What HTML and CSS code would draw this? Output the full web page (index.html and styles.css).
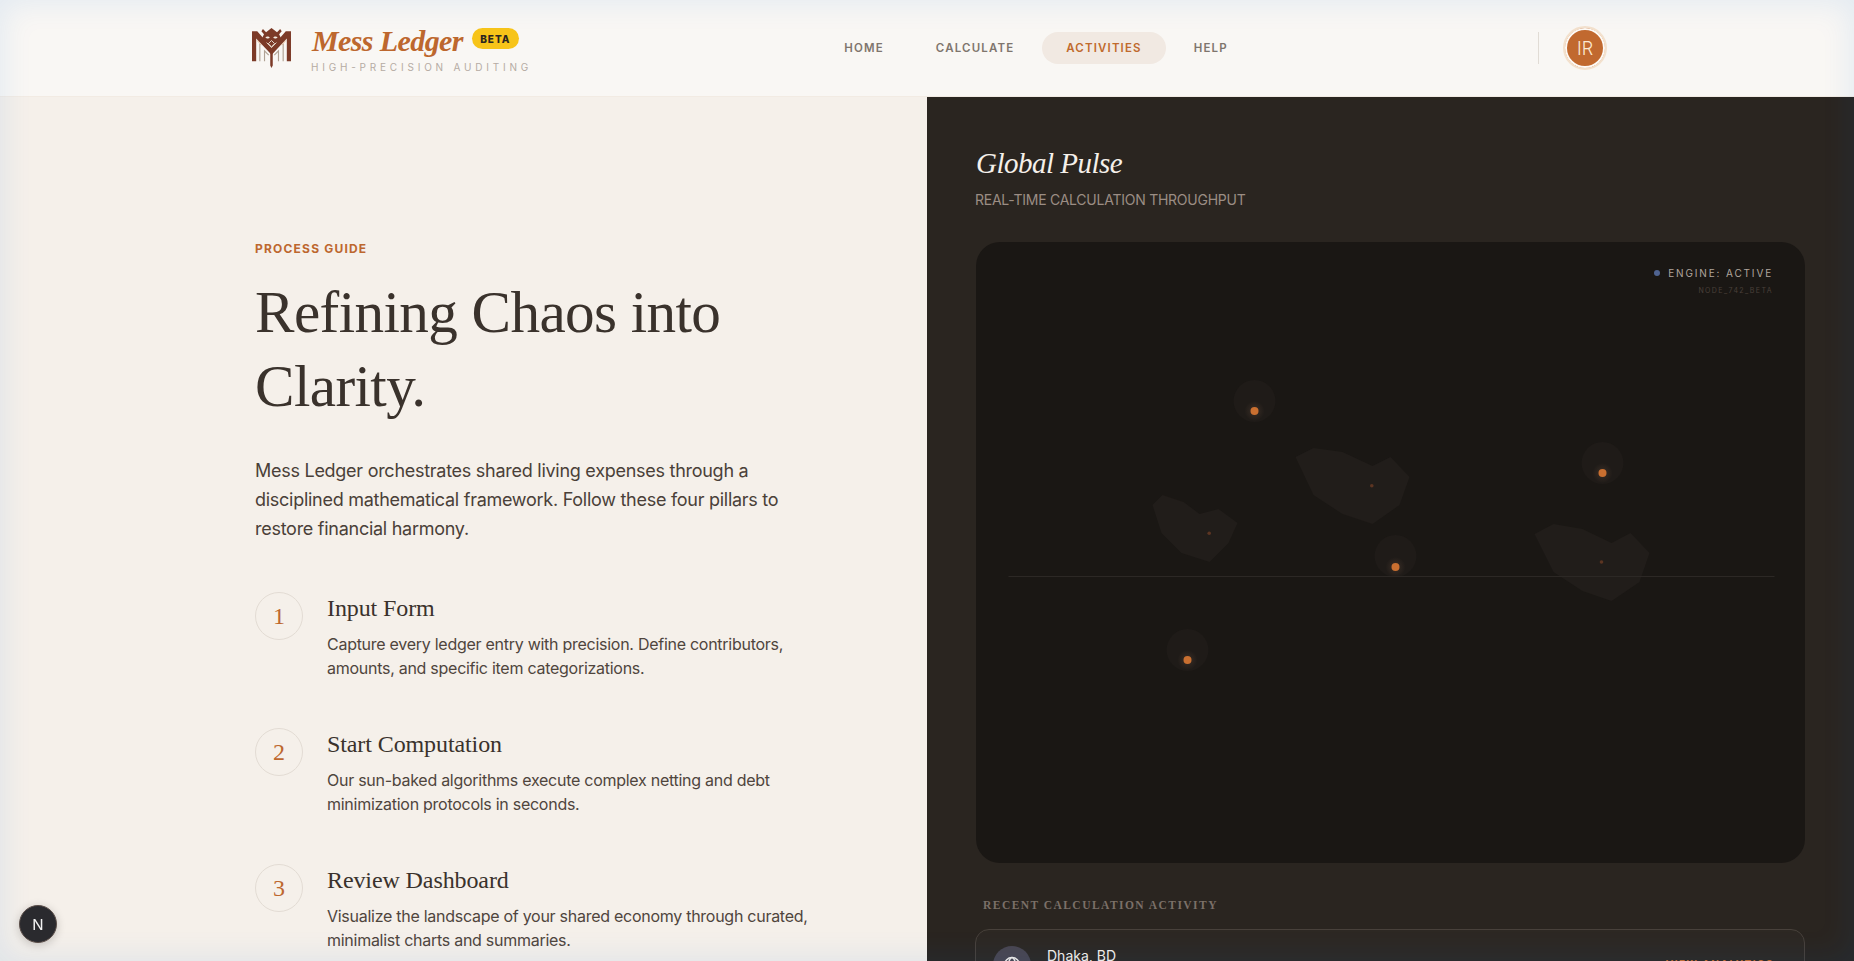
FILE: index.html
```html
<!DOCTYPE html>
<html lang="en">
<head>
<meta charset="utf-8">
<title>Mess Ledger</title>
<link rel="stylesheet" href="styles.css">
</head>
<body>
<div class="app">
  <header class="topbar">
    <div class="brand">
      <svg class="brand-logo" viewBox="0 0 37.400 38.400" aria-hidden="true">
        <path fill="#7c3a27" d="M0 3h5l14 16v7L4 10v22H0zM37.400 3h-5l-13.700 16v7L33.400 10v22h4z"/>
        <path fill="#7c3a27" d="M18.700 0L24 4l3-3 1.500 2L26 6l2 4-9.300 9-9.200-9 2-4-2.500-3L10.500 1l3 3zM17.500 19h2.400v17l-1.200 2.400-1.200-2.400z"/>
        <path fill="#f3ece4" d="M12.800 8.800c1.500-1 3.300-1 4.300 .5-1 1-3.300 1-4.300-.5zM24.600 8.800c-1.500-1-3.300-1-4.300 .5 1 1 3.300 1 4.300-.5z"/>
        <path fill="none" stroke="#e8ddd0" stroke-width=".9" d="M14 14l4.700 4.800 4.700-4.800M18.700 12l3 3-3 3-3-3z"/>
        <path fill="none" stroke="#b0a294" stroke-width="1.100" d="M7.500 32V15M12 32V22L16 26M29.900 32V15M25.400 32V22L21.400 26"/>
        <path fill="none" stroke="#e0a878" stroke-width=".7" d="M5 12l4 4.500M32.400 12l-4 4.500"/>
      </svg>
      <div class="brand-text">
        <div class="brand-row">
          <span class="brand-name">Mess Ledger</span>
          <span class="brand-badge">BETA</span>
        </div>
        <div class="brand-sub">HIGH-PRECISION AUDITING</div>
      </div>
    </div>
    <nav class="nav">
      <a class="nav-link">HOME</a>
      <a class="nav-link">CALCULATE</a>
      <a class="nav-link is-active">ACTIVITIES</a>
      <a class="nav-link">HELP</a>
    </nav>
    <div class="account">
      <div class="avatar"><span>IR</span></div>
    </div>
  </header>

  <main class="panes">
    <section class="guide">
      <div class="eyebrow">PROCESS GUIDE</div>
      <h1 class="headline">Refining Chaos into Clarity.</h1>
      <p class="lede">Mess Ledger orchestrates shared living expenses through a disciplined mathematical framework. Follow these four pillars to restore financial harmony.</p>
      <ol class="steps">
        <li class="step">
          <div class="step-num">1</div>
          <div>
            <h2 class="step-title">Input Form</h2>
            <p class="step-desc">Capture every ledger entry with precision. Define contributors, amounts, and specific item categorizations.</p>
          </div>
        </li>
        <li class="step">
          <div class="step-num">2</div>
          <div>
            <h2 class="step-title">Start Computation</h2>
            <p class="step-desc">Our sun-baked algorithms execute complex netting and debt minimization protocols in seconds.</p>
          </div>
        </li>
        <li class="step">
          <div class="step-num">3</div>
          <div>
            <h2 class="step-title">Review Dashboard</h2>
            <p class="step-desc">Visualize the landscape of your shared economy through curated, minimalist charts and summaries.</p>
          </div>
        </li>
      </ol>
    </section>

    <section class="pulse">
      <h2 class="pulse-title">Global Pulse</h2>
      <div class="pulse-sub">REAL-TIME CALCULATION THROUGHPUT</div>
      <div class="map">
        <svg class="map-art" viewBox="0 0 828 621" aria-hidden="true">
          <defs>
            <radialGradient id="pin-glow">
              <stop offset="0" stop-color="#3a2e26"/>
              <stop offset="1" stop-color="#3a2e26" stop-opacity="0"/>
            </radialGradient>
          </defs>
          <g fill="#211d1a">
            <polygon points="319,215 337,206 366,210 396,224 414,215 433,235 423,263 396,282 366,272 337,253"/>
            <polygon points="176,263 186,253 207,260 223,272 242,267 261,281 252,301 233,320 205,311 185,291"/>
            <polygon points="558,292 577,282 606,287 635,301 654,291 673,311 663,340 635,359 606,349 577,330"/>
          </g>
          <g fill="#5c3522">
            <circle cx="395.300" cy="243.700" r="1.800"/>
            <circle cx="232.700" cy="291.300" r="1.800"/>
            <circle cx="625" cy="320" r="1.800"/>
          </g>
          <g fill="#1f1b18">
            <circle cx="278" cy="159" r="21"/>
            <circle cx="419" cy="314" r="21"/>
            <circle cx="626" cy="221" r="21"/>
            <circle cx="211" cy="408" r="21"/>
          </g>
          <g fill="url(#pin-glow)">
            <circle cx="278" cy="169" r="10"/>
            <circle cx="419" cy="325" r="10"/>
            <circle cx="626" cy="231" r="10"/>
            <circle cx="211" cy="418" r="10"/>
          </g>
          <line x1="32" y1="334.500" x2="798" y2="334.500" stroke="#2c2825" stroke-width="1"/>
          <g fill="#c96f30">
            <circle cx="278" cy="169" r="4"/>
            <circle cx="419" cy="325" r="4"/>
            <circle cx="626" cy="231" r="4"/>
            <circle cx="211" cy="418" r="4"/>
          </g>
        </svg>
        <div class="engine">
          <div class="engine-status"><i class="engine-dot"></i>ENGINE: ACTIVE</div>
          <div class="engine-node">NODE_742_BETA</div>
        </div>
      </div>
      <h3 class="recent">RECENT CALCULATION ACTIVITY</h3>
      <div class="activity">
        <div class="activity-row">
          <div class="activity-main">
            <div class="globe">
              <svg viewBox="0 0 24 24" aria-hidden="true"><circle cx="12" cy="12" r="9"/><ellipse cx="12" cy="12" rx="4" ry="9"/><path d="M3 12h18"/></svg>
            </div>
            <div class="place">Dhaka, BD</div>
          </div>
          <div class="activity-link">VIEW ANALYTICS</div>
        </div>
      </div>
    </section>
  </main>
</div>
<div class="edge-glow"></div>
<div class="dev-badge"><span>N</span></div>
</body>
</html>
```

FILE: styles.css
```css
* { box-sizing: border-box; }
html, body { margin: 0; height: 100%; overflow: hidden; }
body { font-family: Inter, "Liberation Sans", sans-serif; background: #f5f0ea; color: #3a322c; }

.app { height: 100vh; display: flex; flex-direction: column; }

.topbar {
  flex: none; height: 97px; padding: 0 247px 0 252px;
  display: flex; align-items: center; justify-content: space-between;
  background: #f9f7f4; border-bottom: 1px solid #f2ebe3;
}
.brand { display: flex; align-items: center; gap: 21px; width: 282px; }
.brand-logo { width: 39px; height: 40px; flex: none; }
.brand-text { display: flex; flex-direction: column; margin-top: 2px; }
.brand-row { display: flex; align-items: center; gap: 9px; height: 32px; }
.brand-name {
  font-family: "Liberation Serif", serif; font-style: italic; font-weight: 700;
  font-size: 30px; letter-spacing: -0.6px; color: #bd672e; white-space: nowrap;
}
.brand-badge {
  background: #f7c419; color: #2a2520; font-size: 10px; font-weight: 800; letter-spacing: 1px;
  height: 21px; width: 47px; border-radius: 11px; display: flex; align-items: center; justify-content: center; margin-top: -5px;
}
.brand-sub { font-size: 10px; letter-spacing: 3.800px; color: #b5aba3; white-space: nowrap; margin: 4px 0 0 -1px; }

.nav { display: flex; gap: 4px; margin-top: -1px; }
.nav-link {
  height: 32px; padding: 0 24px; border-radius: 16px; display: flex; align-items: center;
  font-size: 11.500px; font-weight: 600; letter-spacing: 1.150px; color: #7f756d;
}
.nav-link.is-active { background: #f1e9e2; color: #c06a2d; }

.account { display: flex; align-items: center; height: 32px; padding-left: 24px; border-left: 1px solid #e1dcd5; }
.avatar {
  width: 44px; height: 44px; border-radius: 50%; background: #c1692f;
  border: 2px solid #fdfaf6; outline: 2px solid #f3e1cd; outline-offset: -2px;
  box-shadow: inset 0 0 0 2px #fdfaf6;
  display: flex; align-items: center; justify-content: center;
  font-size: 18px; font-weight: 300; color: #fbe9d2;
}

.panes { flex: 1; min-height: 0; display: grid; grid-template-columns: 1fr 1fr; }

.guide { background: #f5f0ea; padding: 144px 100px 0 255px; overflow: hidden; }
.eyebrow { font-size: 12px; font-weight: 700; letter-spacing: 1.200px; color: #bd672e; line-height: 16px; }
.headline {
  margin: 18px 0 0; font-family: "Liberation Serif", serif; font-weight: 400;
  font-size: 59.200px; line-height: 74px; color: #3a322c; letter-spacing: -0.6px;
}
.lede { margin: 33px 0 0; font-size: 18px; line-height: 29px; color: #4a4038; letter-spacing: -0.27px; width: 540px; }
.steps { list-style: none; margin: 49px 0 0; padding: 0; }
.step { display: flex; gap: 24px; height: 136px; }
.step-num {
  flex: none; width: 48px; height: 48px; border-radius: 50%; border: 1px solid #e3dcd4;
  display: flex; align-items: center; justify-content: center;
  font-family: "Liberation Serif", serif; font-size: 24px; color: #bd672e;
}
.step-title { margin: 0; font-family: "Liberation Serif", serif; font-weight: 400; font-size: 24px; line-height: 32px; letter-spacing: -0.1px; color: #3a322c; }
.step-desc { margin: 8px 0 0; font-size: 16px; line-height: 24px; color: #4f453d; letter-spacing: -0.27px; width: 500px; }

.pulse { background: #2a2520; padding: 44px 49px 0 48px; overflow: hidden; display: flex; flex-direction: column; }
.pulse-title {
  margin: 0 0 0 1px; font-family: "Liberation Serif", serif; font-style: italic; font-weight: 400;
  font-size: 29px; line-height: 44px; letter-spacing: -0.5px; color: #f5f0ea;
}
.pulse-sub { margin-top: 5px; font-size: 14px; line-height: 20px; letter-spacing: -0.25px; color: #9b8d84; }
.map { position: relative; flex: none; height: 621px; margin: 32px 0 0 1px; border-radius: 24px; background: #1a1714; overflow: hidden; }
.map-art { position: absolute; inset: 0; width: 100%; height: 100%; }
.engine { position: absolute; top: 23px; right: 32px; text-align: right; }
.engine-status { display: flex; align-items: center; gap: 8px; font-size: 10px; line-height: 16px; letter-spacing: 1.850px; color: #b0a69d; }
.engine-dot { width: 6px; height: 6px; border-radius: 50%; background: #4f6391; }
.engine-node { margin-top: 4px; font-size: 7px; line-height: 12px; letter-spacing: 1.400px; color: #4a403a; }

.recent {
  margin: 34px 0 0 8px; font-family: "Liberation Serif", serif; font-weight: 700;
  font-size: 11.500px; line-height: 16px; letter-spacing: 1.450px; color: #7b7068;
}
.activity { margin-top: 16px; border: 1px solid #48413b; border-radius: 14px; background: rgba(255,255,255,.015); }
.activity-row { display: flex; align-items: flex-start; justify-content: space-between; padding: 16px 30px 16px 17px; }
.activity-main { display: flex; gap: 16px; }
.globe { width: 38px; height: 38px; border-radius: 50%; background: #4a4650; display: flex; align-items: center; justify-content: center; }
.globe svg { width: 20px; height: 20px; fill: none; stroke: #f0ebe6; stroke-width: 1.800; }
.place { font-size: 14px; line-height: 20px; color: #f5f0ea; }
.activity-link { margin-top: 12px; font-size: 10px; letter-spacing: 1.500px; font-weight: 700; color: #c96f30; }

.edge-glow {
  position: fixed; inset: 0; pointer-events: none;
  box-shadow: inset 0 0 30px 4px rgba(0, 110, 220, .09);
}
.dev-badge {
  position: fixed; left: 19px; bottom: 18px; width: 38px; height: 38px; border-radius: 50%;
  background: #2a2a2e; border: 1px solid #5a4d48; box-shadow: 0 2px 10px rgba(0,0,0,.2);
  display: flex; align-items: center; justify-content: center;
  font-size: 15px; color: #f2f2f2;
}
```
